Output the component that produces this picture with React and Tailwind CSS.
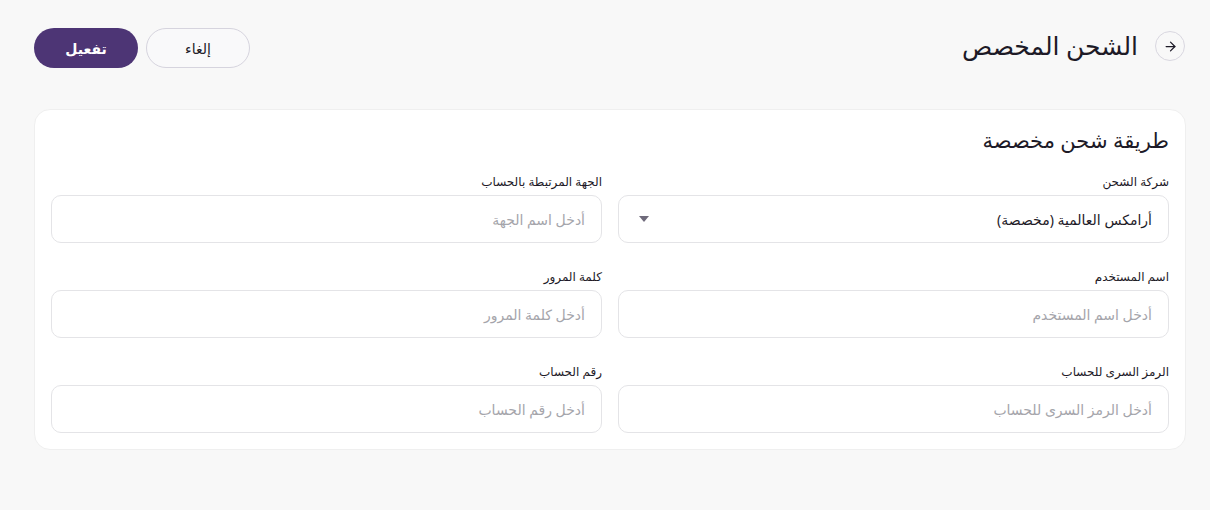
import React from 'react';
import { ArrowRight } from 'lucide-react';

const fields = [
  [
    { label: 'شركة الشحن', value: 'أرامكس العالمية (مخصصة)', select: true },
    { label: 'الجهة المرتبطة بالحساب', placeholder: 'أدخل اسم الجهة' },
  ],
  [
    { label: 'اسم المستخدم', placeholder: 'أدخل اسم المستخدم' },
    { label: 'كلمة المرور', placeholder: 'أدخل كلمة المرور' },
  ],
  [
    { label: 'الرمز السرى للحساب', placeholder: 'أدخل الرمز السرى للحساب' },
    { label: 'رقم الحساب', placeholder: 'أدخل رقم الحساب' },
  ],
];

function Field({ label, placeholder, value, select }) {
  return (
    <div className="flex flex-col">
      <label className="text-[12px] leading-5 text-[#1d1a27] mb-[3px]">{label}</label>
      {select ? (
        <div className="h-12 rounded-[10px] border border-[#e4e4e7] bg-white flex items-center justify-between px-4">
          <span className="text-[14px] text-[#1d1a27]">{value}</span>
          <svg width="10" height="6" viewBox="0 0 10 6" className="ml-1">
            <path d="M0 0h10L5 6z" fill="#6f6a7b" />
          </svg>
        </div>
      ) : (
        <input
          placeholder={placeholder}
          className="h-12 rounded-[10px] border border-[#e4e4e7] bg-white px-4 text-[14px] outline-none placeholder:text-[#a5a5ab]"
        />
      )}
    </div>
  );
}

export default function App() {
  return (
    <div
      dir="rtl"
      className="min-h-[510px] bg-[#f8f8f8] pt-[28px] pr-[24px] pl-[34px] font-['Noto_Sans','DejaVu_Sans',sans-serif]"
    >
      <div className="flex items-center justify-between h-10">
        <div className="flex items-center gap-[17px] pr-[1px]">
          <button className="w-[30px] h-[30px] rounded-full border border-[#d9d7e0] flex items-center justify-center text-[#1d1a27] -mt-1">
            <ArrowRight size={15} strokeWidth={2} />
          </button>
          <h1 className="text-[25px] text-[#1d1a27] -mt-1">الشحن المخصص</h1>
        </div>
        <div className="flex items-center gap-2">
          <button className="w-[104px] h-10 rounded-full border border-[#d6d4de] bg-[#f9f9fa] text-[14px] text-[#1d1a27]">
            إلغاء
          </button>
          <button className="w-[104px] h-10 rounded-full bg-[#4d3575] text-[14px] font-semibold text-white">
            تفعيل
          </button>
        </div>
      </div>

      <div className="mt-[41px] bg-white rounded-2xl border border-[#efefef] px-4 pt-4 pb-4">
        <h2 className="text-[21px] leading-7 text-[#1d1a27] mb-[18px]">طريقة شحن مخصصة</h2>
        <div className="flex flex-col gap-6">
          {fields.map((row, i) => (
            <div key={i} className="grid grid-cols-2 gap-4">
              {row.map((f) => (
                <Field key={f.label} {...f} />
              ))}
            </div>
          ))}
        </div>
      </div>
    </div>
  );
}
